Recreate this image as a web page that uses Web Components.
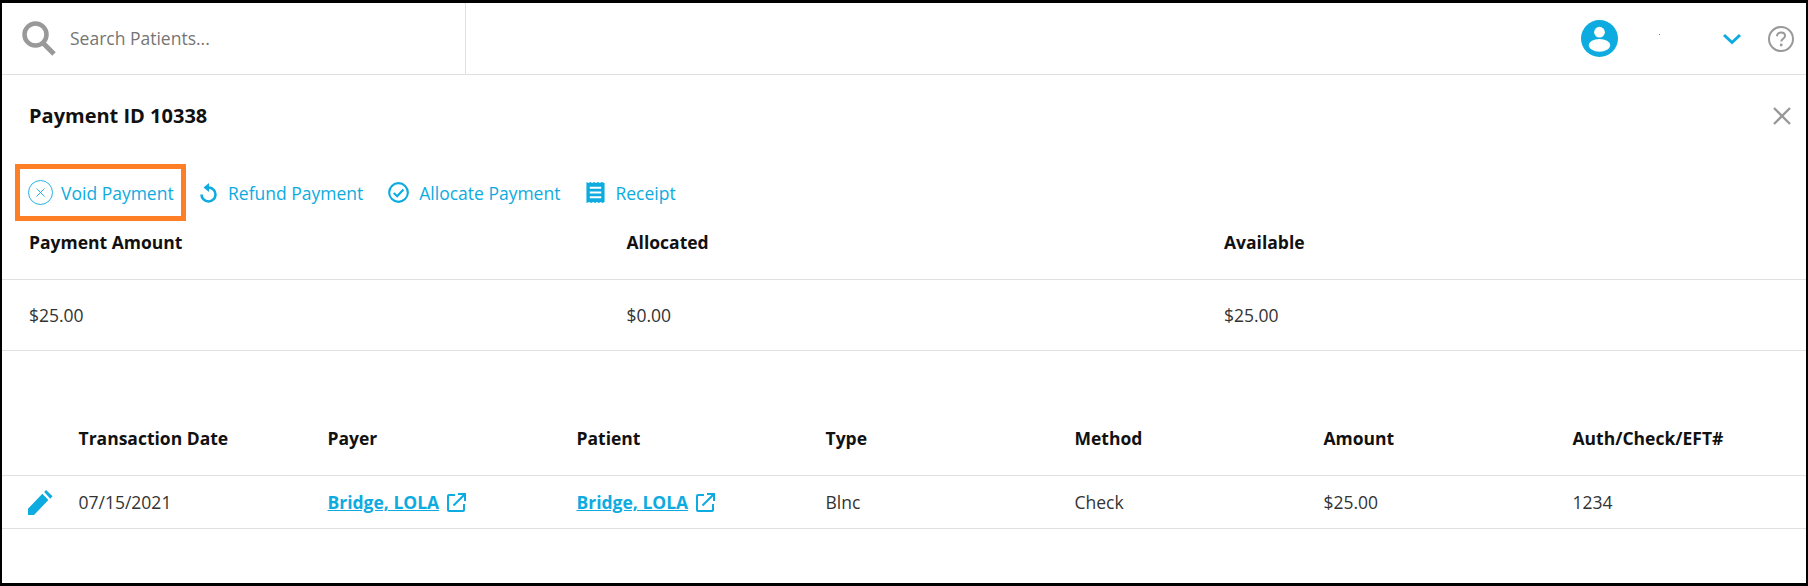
<!DOCTYPE html>
<html>
<head>
<meta charset="utf-8">
<title>Payment ID 10338</title>
<style>
    html, body { margin: 0; padding: 0; background: #fff; }
</style>
</head>
<body>
<payment-page>
    <top-bar></top-bar>
    <payment-title>Payment ID 10338</payment-title>
    <payment-actions></payment-actions>
    <summary-table></summary-table>
    <transaction-table></transaction-table>
</payment-page>

<script>
const BLUE = '#0dabdf';

class PaymentPage extends HTMLElement {
    constructor() {
        super();
        this.attachShadow({ mode: 'open' });
        this.shadowRoot.innerHTML = `
            <style>
                :host {
                    display: block;
                    box-sizing: border-box;
                    width: 1808px;
                    height: 586px;
                    overflow: hidden;
                    border-style: solid;
                    border-color: #000;
                    border-width: 3px 2px 3px 2px;
                    background: #fff;
                    font-family: "Open Sans", sans-serif;
                    font-size: 17.5px;
                    line-height: 24px;
                    color: #333;
                }
            </style>
            <slot></slot>
        `;
    }
}

class TopBar extends HTMLElement {
    constructor() {
        super();
        this.attachShadow({ mode: 'open' });
        this.shadowRoot.innerHTML = `
            <style>
                :host {
                    display: flex;
                    align-items: stretch;
                    box-sizing: border-box;
                    height: 72px;
                    border-bottom: 1px solid #e0e0e0;
                }
                .search {
                    display: flex;
                    align-items: center;
                    box-sizing: border-box;
                    width: 464px;
                    padding-left: 20px;
                    border-right: 1px solid #e0e0e0;
                    color: #757575;
                }
                .search svg { margin-right: 14px; }
                .search span { margin-bottom: 1px; }
                .user {
                    flex: 1;
                    display: flex;
                    align-items: center;
                    justify-content: flex-end;
                    padding-right: 12px;
                }
                .name { width: 1px; height: 1px; margin: -8px 0 0 41px; background: ${BLUE}; }
                .chevron { margin-left: 63px; }
                .help { margin-left: 27px; }
            </style>
            <div class="search">
                <svg width="34" height="36" viewBox="0 0 34 36">
                    <circle cx="13.5" cy="13.5" r="11" fill="none" stroke="#999" stroke-width="4.5"/>
                    <path d="M21 22 L32 33" stroke="#999" stroke-width="5" fill="none"/>
                </svg>
                <span>Search Patients...</span>
            </div>
            <div class="user">
                <svg width="37" height="37" viewBox="0 0 38 38">
                    <circle cx="19" cy="19" r="19" fill="${BLUE}"/>
                    <circle cx="19" cy="12.5" r="5.5" fill="#fff"/>
                    <ellipse cx="19" cy="26" rx="11" ry="6.5" fill="#fff"/>
                </svg>
                <span class="name"></span>
                <svg class="chevron" width="18" height="12" viewBox="0 0 18 12">
                    <path d="M1 2 L9 9.5 L17 2" fill="none" stroke="${BLUE}" stroke-width="3"/>
                </svg>
                <svg class="help" width="26" height="26" viewBox="0 0 26 26">
                    <circle cx="13" cy="13" r="12" fill="none" stroke="#999" stroke-width="2"/>
                    <path d="M9 10.2 C9 7.8 10.8 6.6 13 6.6 C15.3 6.6 17 7.9 17 9.9 C17 12.6 13.2 12.8 13.2 15.6" fill="none" stroke="#999" stroke-width="2"/>
                    <circle cx="13.2" cy="19" r="1.4" fill="#999"/>
                </svg>
            </div>
        `;
    }
}

class PaymentTitle extends HTMLElement {
    constructor() {
        super();
        this.attachShadow({ mode: 'open' });
        this.shadowRoot.innerHTML = `
            <style>
                :host {
                    display: flex;
                    align-items: center;
                    justify-content: space-between;
                    box-sizing: border-box;
                    height: 82px;
                    padding: 0 15px 0 27px;
                    font-weight: 700;
                    font-size: 20px;
                    color: #111;
                }
                svg { display: block; }
            </style>
            <span><slot></slot></span>
            <svg width="18" height="18" viewBox="0 0 18 18">
                <path d="M1 1 L17 17 M17 1 L1 17" stroke="#999" stroke-width="2.4" fill="none"/>
            </svg>
        `;
    }
}

class ActionLink extends HTMLElement {
    constructor() {
        super();
        this.attachShadow({ mode: 'open' });
        this.shadowRoot.innerHTML = `
            <style>
                :host {
                    display: inline-flex;
                    align-items: center;
                    gap: var(--icon-gap, 10px);
                    color: ${BLUE};
                    white-space: nowrap;
                }
                ::slotted(svg) { display: block; }
            </style>
            <slot name="icon"></slot>
            <span><slot></slot></span>
        `;
    }
}

class PaymentActions extends HTMLElement {
    constructor() {
        super();
        this.attachShadow({ mode: 'open' });
        this.shadowRoot.innerHTML = `
            <style>
                :host {
                    display: flex;
                    align-items: center;
                    box-sizing: border-box;
                    height: 57px;
                    margin-top: 7px;
                    margin-left: 13px;
                }
                .void {
                    display: flex;
                    align-items: center;
                    box-sizing: border-box;
                    width: 171px;
                    height: 57px;
                    padding-left: 8px;
                    border: 5px solid #ff7f27;
                    margin-right: 14px;
                    --icon-gap: 8px;
                }
                .refund { margin-right: 25px; --icon-gap: 11px; }
                .allocate { margin-right: 26px; }
                .receipt { --icon-gap: 10px; }
            </style>
            <div class="void">
                <action-link>
                    <svg slot="icon" width="25" height="25" viewBox="0 0 25 25">
                        <circle cx="12.5" cy="12.5" r="12" fill="none" stroke="${BLUE}" stroke-width="0.9"/>
                        <path d="M8.5 8.5 L16.5 16.5 M16.5 8.5 L8.5 16.5" stroke="${BLUE}" stroke-width="0.9" fill="none"/>
                    </svg>
                    Void Payment
                </action-link>
            </div>
            <action-link class="refund">
                <svg slot="icon" width="17" height="20" viewBox="0 0 17 20">
                    <path d="M8.5 4.5 A7 7 0 1 1 1.5 11.5" fill="none" stroke="${BLUE}" stroke-width="2.6"/>
                    <path d="M9 0 L9 9 L3.5 4.5 Z" fill="${BLUE}"/>
                </svg>
                Refund Payment
            </action-link>
            <action-link class="allocate">
                <svg slot="icon" width="21" height="21" viewBox="0 0 22 22">
                    <circle cx="11" cy="11" r="9.8" fill="none" stroke="${BLUE}" stroke-width="2.2"/>
                    <path d="M6 11.5 L9.6 15 L16.2 7.8" fill="none" stroke="${BLUE}" stroke-width="2.2"/>
                </svg>
                Allocate Payment
            </action-link>
            <action-link class="receipt">
                <svg slot="icon" width="19" height="21" viewBox="0 0 19 22">
                    <path d="M0 0 L2 1 L4 0 L6 1 L8 0 L10 1 L12 0 L14 1 L16 0 L19 1 L19 21 L17 22 L15 21 L13 22 L11 21 L9 22 L7 21 L5 22 L3 21 L0 22 Z" fill="${BLUE}"/>
                    <path d="M3.5 6 H15.5 M3.5 11 H15.5 M3.5 16 H15.5" stroke="#fff" stroke-width="2" fill="none"/>
                </svg>
                Receipt
            </action-link>
        `;
    }
}

class SummaryTable extends HTMLElement {
    constructor() {
        super();
        this.attachShadow({ mode: 'open' });
        this.shadowRoot.innerHTML = `
            <style>
                :host { display: block; }
                .row {
                    display: grid;
                    grid-template-columns: repeat(3, 597.5px);
                    box-sizing: border-box;
                    padding-left: 27px;
                    border-bottom: 1px solid #e0e0e0;
                }
                .head { height: 59px; padding-top: 9px; font-weight: 700; color: #111; }
                .body { height: 71px; align-items: center; }
            </style>
            <div class="row head"><span>Payment Amount</span><span>Allocated</span><span>Available</span></div>
            <div class="row body"><span>$25.00</span><span>$0.00</span><span>$25.00</span></div>
        `;
    }
}

class TransactionTable extends HTMLElement {
    constructor() {
        super();
        this.attachShadow({ mode: 'open' });
        const link = `<span class="link"><a>Bridge, LOLA</a>
            <svg width="19" height="19" viewBox="0 0 19 19">
                <path d="M8 2 H2 a1 1 0 0 0 -1 1 V17 a1 1 0 0 0 1 1 H16 a1 1 0 0 0 1 -1 V11" fill="none" stroke="${BLUE}" stroke-width="2"/>
                <path d="M6.5 12.5 L17 2 M11 1 H18 V8" fill="none" stroke="${BLUE}" stroke-width="2"/>
            </svg></span>`;
        this.shadowRoot.innerHTML = `
            <style>
                :host { display: block; margin-top: 75px; }
                .row {
                    display: grid;
                    grid-template-columns: 76.5px repeat(6, 249px) 1fr;
                    box-sizing: border-box;
                    border-bottom: 1px solid #e0e0e0;
                }
                .head { height: 50px; font-weight: 700; color: #111; }
                .body { height: 53px; align-items: center; }
                .edit { display: flex; padding-left: 26px; }
                .link { display: inline-flex; align-items: center; gap: 8px; }
                a { color: ${BLUE}; font-weight: 700; text-decoration: underline; }
            </style>
            <div class="row head">
                <span></span><span>Transaction Date</span><span>Payer</span><span>Patient</span>
                <span>Type</span><span>Method</span><span>Amount</span><span>Auth/Check/EFT#</span>
            </div>
            <div class="row body">
                <span class="edit">
                    <svg width="25" height="25" viewBox="0 0 27 26" preserveAspectRatio="none">
                        <path d="M0 26 V19.5 L15.5 4 L22 10.5 L6.5 26 Z M17.5 2 L19.5 0 L26.5 6.5 L24 9 Z" fill="${BLUE}"/>
                    </svg>
                </span>
                <span>07/15/2021</span>
                <span>${link}</span>
                <span>${link}</span>
                <span>Blnc</span><span>Check</span><span>$25.00</span><span>1234</span>
            </div>
        `;
    }
}

customElements.define('payment-page', PaymentPage);
customElements.define('top-bar', TopBar);
customElements.define('payment-title', PaymentTitle);
customElements.define('action-link', ActionLink);
customElements.define('payment-actions', PaymentActions);
customElements.define('summary-table', SummaryTable);
customElements.define('transaction-table', TransactionTable);
</script>
</body>
</html>
